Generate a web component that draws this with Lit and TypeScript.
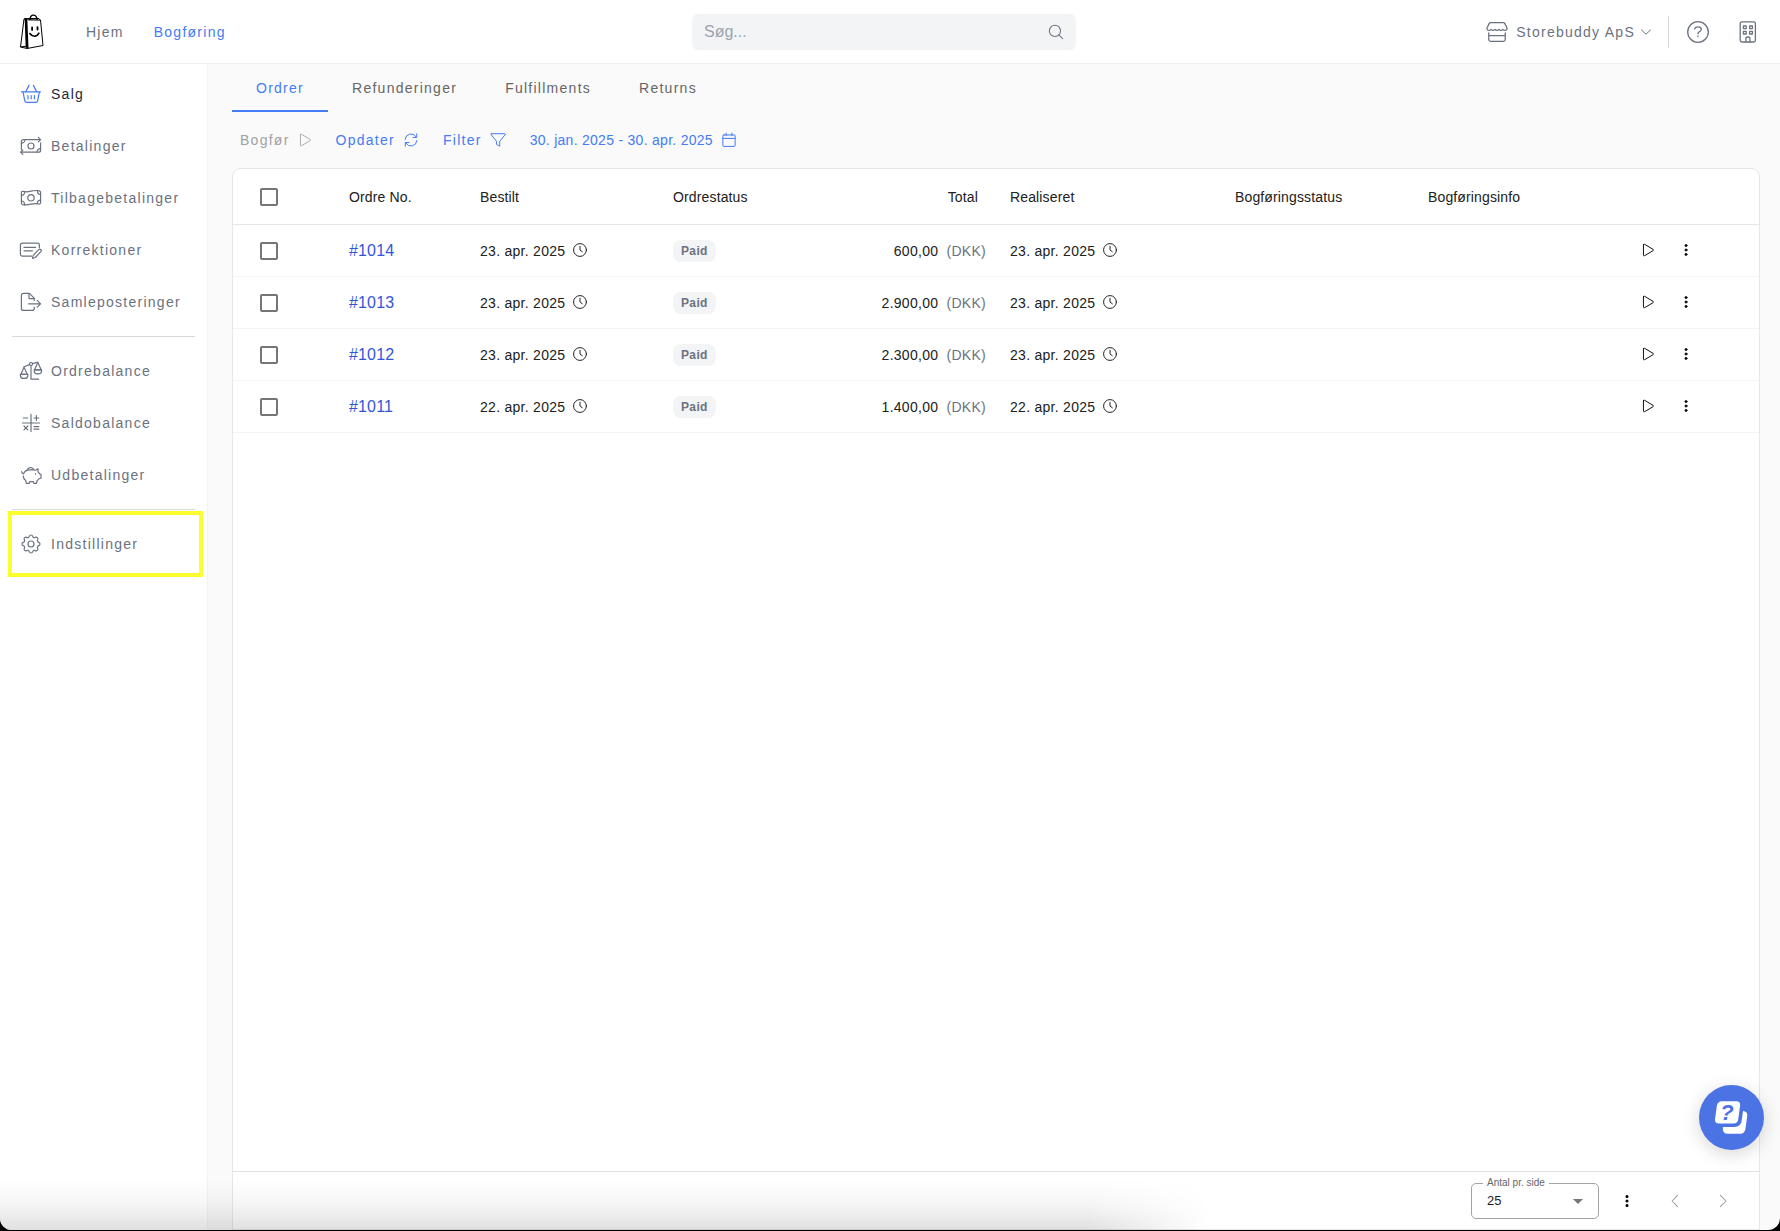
import { LitElement, html, svg, css, nothing } from "lit";
import type { TemplateResult } from "lit";
import { customElement, property } from "lit/decorators.js";
import { classMap } from "lit/directives/class-map.js";

/* Line icons on a 24-unit grid; every one inherits its stroke from the host. */
const ICONS: Record<string, TemplateResult> = {
  basket: svg`
    <path d="M2.5 9.8h19"/>
    <path d="M6.8 9.6 10 3.4M17.6 9.6l-3.2-6.2"/>
    <path d="M4 10l1.8 8.8a2 2 0 0 0 2 1.6h8.8a2 2 0 0 0 2-1.6L20.4 10"/>
    <path d="M9 13.6v3.2M12.2 13.6v3.2M15.4 13.6v3.2"/>`,
  transfer: svg`
    <path d="M2.4 15.4V7.6a2 2 0 0 1 2-2h17.2M19.4 3.4l2.2 2.2-2.2 2.2"/>
    <path d="M21.6 8.8v7.4a2 2 0 0 1-2 2H1.6M3.8 16l-2.2 2.2 2.2 2.2"/>
    <circle cx="12" cy="12" r="3"/>
    <path d="M2.4 9.2a3.6 3.6 0 0 0 3.6-3.6M21.6 14.6a3.6 3.6 0 0 0-3.6 3.6"/>`,
  refund: svg`
    <path d="M2.4 6.6c0-.9.8-1.4 1.6-1.2 3 .8 5 .6 8-.2s5.4-1 8.2-.4c.8.2 1.4.8 1.4 1.600v10.4c0 .9-.8 1.4-1.6 1.2-3-.8-5-.6-8 .2s-5.4 1-8.2.4c-.8-.2-1.4-.8-1.4-1.6z"/>
    <circle cx="12" cy="11.8" r="3.2"/>
    <path d="M2.4 9.4c1.8 0 3.2-1.4 3.4-3.6M21.6 8.6c-1.8 0-3.2-1.4-3.2-4M21.6 14.2c-1.8 0-3.2 1.4-3.4 3.6M2.4 15c1.8 0 3.2 1.4 3.2 4"/>`,
  note: svg`
    <path d="M12.6 18.2H3.4a2 2 0 0 1-2-2V7.2a2 2 0 0 1 2-2h15a2 2 0 0 1 2 2v2.4"/>
    <path d="M5 9.4h11.6M5 12.8h8.4"/>
    <path d="M19.6 11.6a1.5 1.5 0 0 1 2.2 2.1l-5.4 5.8-3 .9.9-3z"/>`,
  fileOut: svg`
    <path d="M15.2 10.4V8.2l-4.8-4.8H4.4a2 2 0 0 0-2 2v13a2 2 0 0 0 2 2h8.800a2 2 0 0 0 2-2v-1.2"/>
    <path d="M10 3.6v5h5"/>
    <path d="M9.6 13.8h12M18.2 10.4l3.4 3.4-3.4 3.4"/>`,
  scale: svg`
    <path d="M12 6.6v13.6h7.6"/>
    <path d="M4.8 8 10.4 5.6M13.6 4.6 19 3.2"/>
    <circle cx="12" cy="5" r="1.5"/>
    <path d="M5 8.2 1.8 15.4h6.6z"/>
    <path d="M1.4 15.4v1.2a3 3 0 0 0 3 2.8h1.4a3 3 0 0 0 3-2.8v-1.2z"/>
    <path d="M18.8 3.6l-3.2 7.2h6.6z"/>
    <path d="M15.2 10.8V12a3 3 0 0 0 3 2.8h1.4a3 3 0 0 0 3-2.8v-1.2z"/>`,
  maths: svg`
    <path d="M12 3.4v17.2M3.4 12h17.2"/>
    <path d="M4.2 7h4.6M15 7h4.8M17.4 4.6v4.8M5 15l3.8 3.8M8.8 15 5 18.8M15 15.6h4.8M15 18.2h4.8"/>`,
  piggy: svg`
    <path d="M8.2 6.8a3.6 3.6 0 0 1 6.4-.4"/>
    <path d="M2.6 8.6c0 1.4.6 2 2 2.2.8-2.6 3.4-4 6.2-4h3.2c1 0 1.8.1 2.6.4l2.4-1.4v3c.7.6 1.2 1.3 1.5 2.1l1.5.5v3.8l-2 .6c-.5.8-1.1 1.4-2 1.9l-.5 2.7h-2.7l-.4-1.8h-3.6l-.5 1.8H7.4l-.7-2.9c-1.5-1-2.5-2.6-2.5-4.7"/>
    <path d="M16.6 10.6v.6"/>`,
  gear: svg`
    <path d="M10.325 4.317c.426-1.756 2.924-1.756 3.35 0a1.724 1.724 0 0 0 2.573 1.066c1.543-.94 3.31.826 2.37 2.37a1.724 1.724 0 0 0 1.065 2.572c1.756.426 1.756 2.924 0 3.35a1.724 1.724 0 0 0-1.066 2.573c.94 1.543-.826 3.31-2.37 2.37a1.724 1.724 0 0 0-2.572 1.065c-.426 1.756-2.924 1.756-3.35 0a1.724 1.724 0 0 0-2.573-1.066c-1.543.94-3.31-.826-2.37-2.37a1.724 1.724 0 0 0-1.065-2.572c-1.756-.426-1.756-2.924 0-3.35a1.724 1.724 0 0 0 1.066-2.573c-.94-1.543.826-3.31 2.37-2.37.996.608 2.296.07 2.572-1.065z"/>
    <circle cx="12" cy="12" r="3"/>`,
  search: svg`<circle cx="10.4" cy="10.4" r="8.4"/><path d="M16.6 16.6 22 22"/>`,
  store: svg`
    <path d="M5.2 1.800h13.6a2 2 0 0 1 1.8 1.1l2.2 4.4c.6 1.6-.4 3-2 3-1.2 0-2-.7-2.4-1.2-.6.7-1.4 1.2-2.2 1.2s-1.6-.5-2.1-1.2c-.5.7-1.3 1.2-2.1 1.2s-1.6-.5-2.1-1.2c-.5.7-1.3 1.2-2.1 1.2s-1.6-.5-2.2-1.2c-.4.5-1.2 1.2-2.4 1.2-1.6 0-2.600-1.4-2-3l2.2-4.4a2 2 0 0 1 1.8-1.1z"/>
    <path d="M3 13v7.2a2 2 0 0 0 2 2h14a2 2 0 0 0 2-2V13M3 16h18"/>`,
  help: svg`
    <circle cx="12" cy="12" r="10.3"/>
    <path d="M8.6 8.8c.7-1.2 2-2 3.5-1.9 1.7 0 3.2 1 3.2 2.5 0 1.3-1.1 1.9-2.1 2.4-.8.4-1.2.8-1.2 1.6v.4M12 16v.6"/>`,
  building: svg`
    <rect x="4.2" y="1.8" width="15.2" height="20.2" rx="1.8"/>
    <path d="M7.4 6h2.800v2.600H7.400zM13.600 6h2.800v2.600h-2.800zM7.400 11.400h2.800V14H7.400zM13.600 11.400h2.800V14h-2.800zM9.900 22v-3.400c0-1 .7-1.600 2-1.600s2 .6 2 1.600V22"/>`,
  play: svg`<path d="M4.200 3.200v17.600c0 1 1 1.500 1.900 1l14.600-8.600c.9-.5.9-1.800 0-2.300L6.100 2.200c-.9-.5-1.900 0-1.900 1z"/>`,
  refresh: svg`
    <path d="M3.2 11.2A8.9 8.9 0 0 1 19.8 7.4M20.800 12.800A8.900 8.900 0 0 1 4.200 16.600"/>
    <path d="M20.600 2.600v5.600H15M3.400 21.400v-5.600H9"/>`,
  filter: svg`<path d="M2 2.600h20.400c.6 0 .9.700.5 1.200L14.600 14v7.200L9.800 18.600V14L1.500 3.800C1.100 3.300 1.400 2.600 2 2.600z"/>`,
  calendar: svg`
    <path d="M4.400 4.400h15.200a1.600 1.600 0 0 1 1.600 1.600v14a1.600 1.600 0 0 1-1.600 1.600H4.400A1.600 1.600 0 0 1 2.800 20V6a1.600 1.600 0 0 1 1.600-1.600zM2.800 9.600h18.400M7.600 1.600v4M16.400 1.600v4"/>`,
  clock: svg`<circle cx="12" cy="12" r="11"/><path d="M12 5.600V12l4 3"/>`,
  down: svg`<path d="M3 8l9 8.400L21 8"/>`,
  left: svg`<path d="M16.400 2.400 7 12l9.400 9.600"/>`,
  right: svg`<path d="M7.600 2.400 17 12l-9.400 9.600"/>`,
  dots: svg`
    <circle cx="12" cy="4.400" r="1.700" class="dot"/>
    <circle cx="12" cy="12" r="1.700" class="dot"/>
    <circle cx="12" cy="19.600" r="1.700" class="dot"/>`,
};

@customElement("line-icon")
export class LineIcon extends LitElement {
  @property() name = "";
  static styles = css`
    :host { display: inline-flex; flex: none; width: 24px; height: 24px; }
    svg {
      width: 100%; height: 100%; fill: none; stroke: currentColor; overflow: visible;
      stroke-width: var(--stroke, 1); stroke-linecap: round; stroke-linejoin: round;
    }
    .dot { fill: currentColor; }
  `;
  render() {
    return html`<svg viewBox="0 0 24 24" aria-hidden="true">${ICONS[this.name] ?? nothing}</svg>`;
  }
}

interface NavItem { label: string; icon: string; active?: boolean; marked?: boolean; }

const NAV: NavItem[][] = [
  [
    { label: "Salg", icon: "basket", active: true },
    { label: "Betalinger", icon: "transfer" },
    { label: "Tilbagebetalinger", icon: "refund" },
    { label: "Korrektioner", icon: "note" },
    { label: "Samleposteringer", icon: "fileOut" },
  ],
  [
    { label: "Ordrebalance", icon: "scale" },
    { label: "Saldobalance", icon: "maths" },
    { label: "Udbetalinger", icon: "piggy" },
  ],
  [{ label: "Indstillinger", icon: "gear", marked: true }],
];

@customElement("side-nav")
export class SideNav extends LitElement {
  static styles = css`
    :host { display: block; background: #fff; border-right: 1px solid #f3f4f6; }
    nav { padding: 4px 12px; }
    ul { list-style: none; margin: 0; padding: 0; }
    ul + ul { border-top: 1px solid #d9dade; margin-top: 8px; padding-top: 8px; }
    li { position: relative; }
    a {
      display: flex; align-items: center; gap: 8px; height: 52px; padding-left: 7px;
      color: #6b7280; font-size: 14px; letter-spacing: 0.09em; text-decoration: none;
    }
    line-icon { --stroke: 1.2; }
    .active { color: #1f2937; }
    .active line-icon { color: #447cf5; }
    .marked::after {
      content: ""; position: absolute; inset: -7px -8px -7px -4px;
      border: 4px solid #fcff2e; pointer-events: none;
    }
  `;
  render() {
    return html`<nav aria-label="Bogføring">
      ${NAV.map((group) => html`<ul>
        ${group.map((item) => html`<li class=${classMap({ marked: !!item.marked })}>
          <a href="#" class=${classMap({ active: !!item.active })}>
            <line-icon name=${item.icon}></line-icon><span>${item.label}</span>
          </a>
        </li>`)}
      </ul>`)}
    </nav>`;
  }
}

@customElement("top-bar")
export class TopBar extends LitElement {
  static styles = css`
    :host { display: block; background: #fff; border-bottom: 1px solid #f1f1f3; }
    header {
      display: grid; grid-template-columns: 1fr minmax(200px, 384px) 1fr;
      align-items: center; height: 63px; padding: 0 20px 0 8px;
      color: #6b7280; font-size: 14px; letter-spacing: 0.09em;
    }
    .start, .end, .company { display: flex; align-items: center; }
    .start { gap: 30px; }
    .end { justify-content: flex-end; }
    .logo { width: 40px; height: 40px; margin: 0 4px; color: #000; }
    .logo svg { display: block; width: 40px; height: 40px; }
    .start a { color: inherit; text-decoration: none; }
    .start .current { color: #447cf5; }
    .search {
      display: flex; align-items: center; height: 36px; padding: 0 12px;
      border-radius: 6px; background: #f3f4f6;
    }
    .search line-icon { width: 16px; height: 16px; --stroke: 1.6; }
    input {
      flex: 1; min-width: 0; padding: 0; border: 0; outline: 0; background: none;
      font: inherit; font-size: 16px; letter-spacing: normal; color: #1f2937;
    }
    input::placeholder { color: #9ca3af; opacity: 1; }
    button { display: flex; padding: 0; border: 0; background: none; color: inherit; font: inherit; letter-spacing: inherit; }
    .company { gap: 8px; padding-right: 16px; border-right: 1px solid #d9dade; height: 32px; margin-right: 17px; }
    .company line-icon { width: 22px; height: 22px; --stroke: 1.4; }
    .company .caret { width: 12px; height: 12px; --stroke: 2; margin-left: -3px; }
    .tool + .tool { margin-left: 26px; }
    .tool line-icon { --stroke: 1.3; }
  `;
  render() {
    return html`<header>
      <div class="start">
        <a class="logo" href="#" aria-label="Storebuddy">
          <svg viewBox="0.5 1.500 40 40">
            <path d="M12.500 8.500 9 36.500l6.500 1.500L31.500 35 29 9.500l-2-1.500z" fill="#fff" stroke="#000"/>
            <path d="M13.200 8.200h2.600l1.200 29.600-2.800-.6z" fill="#000"/>
            <path d="M9 36.400l5.600-.6M27 8l-14.300.3M16.600 9.400 29 9.600" fill="none" stroke="#000"/>
            <path d="M18.500 9.500c-.2-6.600 6.600-6.400 7.200 0" fill="none" stroke="#000" stroke-width="1.400"/>
            <path d="M20.600 16.800v2.600M26 16.600v2.400" fill="none" stroke="#000" stroke-width="1.800" stroke-linecap="round"/>
            <path d="M18.400 23c2.600 3.800 7 3.600 9-.4" fill="none" stroke="#000" stroke-width="1.600" stroke-linecap="round"/>
          </svg>
        </a>
        <a href="#">Hjem</a>
        <a href="#" class="current">Bogføring</a>
      </div>
      <label class="search">
        <input type="search" placeholder="Søg..." aria-label="Søg" />
        <line-icon name="search"></line-icon>
      </label>
      <div class="end">
        <button class="company" type="button">
          <line-icon name="store"></line-icon>
          <span>Storebuddy ApS</span>
          <line-icon class="caret" name="down"></line-icon>
        </button>
        <button class="tool" type="button" aria-label="Hjælp"><line-icon name="help"></line-icon></button>
        <button class="tool" type="button" aria-label="Virksomhed"><line-icon name="building"></line-icon></button>
      </div>
    </header>`;
  }
}

interface Order { no: string; date: string; status: string; total: string; }

const ORDERS: Order[] = [
  { no: "#1014", date: "23. apr. 2025", status: "Paid", total: "600,00" },
  { no: "#1013", date: "23. apr. 2025", status: "Paid", total: "2.900,00" },
  { no: "#1012", date: "23. apr. 2025", status: "Paid", total: "2.300,00" },
  { no: "#1011", date: "22. apr. 2025", status: "Paid", total: "1.400,00" },
];

@customElement("order-table")
export class OrderTable extends LitElement {
  static styles = css`
    :host {
      display: flex; flex-direction: column; background: #fff;
      border: 1px solid #e5e7eb; border-radius: 8px 8px 0 0; color: #212121; font-size: 14px;
    }
    .scroll { flex: 1; min-height: 0; overflow: auto; }
    table { width: 100%; border-collapse: separate; border-spacing: 0; table-layout: fixed; }
    .c-check { width: 100px; }
    .c-no { width: 131px; }
    .c-std { width: 193px; }
    .c-total { width: 144px; }
    .c-real { width: 225px; }
    .c-act { width: 154px; }
    th, td { box-sizing: border-box; padding: 0 0 0 16px; text-align: left; white-space: nowrap; }
    th { height: 56px; border-bottom: 1px solid #e5e7eb; font-weight: 400; letter-spacing: 0.01em; }
    td { height: 52px; border-bottom: 1px solid #f3f4f6; letter-spacing: 0.02em; }
    .pick { padding-left: 27px; }
    th.total { padding-right: 16px; text-align: right; }
    td.total { padding-right: 8px; text-align: right; }
    .total span { margin-left: 4px; color: #6b7280; }
    .act { padding-left: 28px; }
    .pick input {
      appearance: none; display: block; width: 18px; height: 18px; margin: 0;
      border: 2px solid #757575; border-radius: 2px; background: #fff;
    }
    .pick input:checked { background: #447cf5; border-color: #447cf5; }
    td a { color: #3455db; font-size: 16px; letter-spacing: 0.01em; text-decoration: none; }
    .when, .tools { display: flex; align-items: center; gap: 8px; }
    .when line-icon { width: 14px; height: 14px; margin-bottom: 2px; --stroke: 1.7; }
    .chip {
      display: inline-block; height: 22px; padding: 0 8px; border-radius: 8px;
      background: #f3f4f6; color: #6b7280; font-size: 12px; font-weight: 700;
      line-height: 22px; letter-spacing: 0.03em; vertical-align: middle;
    }
    button {
      display: flex; align-items: center; justify-content: center; width: 30px; height: 30px;
      padding: 0; border: 0; background: none; color: #000;
    }
    .tools { padding-bottom: 2px; }
    .tools line-icon { width: 14px; height: 14px; --stroke: 1.6; }
    footer {
      display: flex; align-items: center; justify-content: flex-end; gap: 8px;
      height: 57px; padding: 0 16px 0 0; border-top: 1px solid #e0e0e0;
    }
    footer button { width: 40px; height: 40px; }
    footer line-icon { width: 14px; height: 14px; --stroke: 1.8; }
    footer button:disabled { color: #9e9e9e; }
    .size { position: relative; }
    .size label {
      position: absolute; top: -6px; left: 12px; padding: 0 4px; background: #fff;
      color: #666; font-size: 10px; line-height: 12px;
    }
    .size select {
      appearance: none; display: block; width: 128px; height: 36px; padding: 0 15px;
      border: 1px solid #a3a3a3; border-radius: 5px; background: #fff;
      color: #212121; font: inherit; font-size: 13px;
    }
    .size::after {
      content: ""; position: absolute; right: 16px; top: 16px; pointer-events: none;
      border: 5px solid transparent; border-top-color: #757575; border-bottom: 0;
    }
  `;
  private when(date: string) {
    return html`<span class="when">${date}<line-icon name="clock"></line-icon></span>`;
  }
  render() {
    return html`
      <div class="scroll">
        <table>
          <colgroup>
            <col class="c-check" /><col class="c-no" /><col class="c-std" /><col class="c-std" />
            <col class="c-total" /><col class="c-real" /><col class="c-std" /><col class="c-std" /><col class="c-act" />
          </colgroup>
          <thead>
            <tr>
              <th class="pick"><input type="checkbox" aria-label="Vælg alle" /></th>
              <th>Ordre No.</th><th>Bestilt</th><th>Ordrestatus</th><th class="total">Total</th>
              <th>Realiseret</th><th>Bogføringsstatus</th><th>Bogføringsinfo</th><th></th>
            </tr>
          </thead>
          <tbody>
            ${ORDERS.map((o) => html`<tr>
              <td class="pick"><input type="checkbox" aria-label=${`Vælg ${o.no}`} /></td>
              <td><a href="#">${o.no}</a></td>
              <td>${this.when(o.date)}</td>
              <td><span class="chip">${o.status}</span></td>
              <td class="total">${o.total} <span>(DKK)</span></td>
              <td>${this.when(o.date)}</td>
              <td></td>
              <td></td>
              <td class="act"><div class="tools">
                <button type="button" aria-label="Bogfør"><line-icon name="play"></line-icon></button>
                <button type="button" aria-label="Mere"><line-icon name="dots"></line-icon></button>
              </div></td>
            </tr>`)}
          </tbody>
        </table>
      </div>
      <footer>
        <div class="size">
          <select id="page-size"><option>25</option><option>50</option><option>100</option></select>
          <label for="page-size">Antal pr. side</label>
        </div>
        <button type="button" aria-label="Mere"><line-icon name="dots"></line-icon></button>
        <button type="button" aria-label="Forrige side" disabled><line-icon name="left"></line-icon></button>
        <button type="button" aria-label="Næste side" disabled><line-icon name="right"></line-icon></button>
      </footer>`;
  }
}

@customElement("app-root")
export class AppRoot extends LitElement {
  static styles = css`
    :host {
      display: block; height: 100vh; overflow: hidden; background: #000;
      font-family: "Liberation Sans", Arial, Helvetica, sans-serif;
    }
    .shell {
      position: relative; box-sizing: border-box; display: grid;
      grid-template: auto minmax(0, 1fr) / 208px minmax(0, 1fr);
      height: calc(100vh - 1px); overflow: hidden; background: #fafafa;
      border-radius: 0 0 12px 12px;
    }
    top-bar { grid-column: 1 / -1; }
    main { display: flex; flex-direction: column; padding: 0 20px 0 24px; min-width: 0; }
    order-table { flex: 1; min-height: 0; }
    .tabs { display: flex; height: 48px; }
    .tabs button {
      padding: 2px 24px 0; border: 0; border-bottom: 2px solid transparent; background: none;
      color: #666; font: inherit; font-size: 14px; letter-spacing: 0.09em;
    }
    .tabs .current { color: #447cf5; border-color: #447cf5; }
    .tools { display: flex; align-items: center; gap: 8px; height: 56px; }
    .tools button {
      display: flex; align-items: center; gap: 8px; padding: 0 8px; border: 0; background: none;
      color: #447cf5; font: inherit; font-size: 14px; letter-spacing: 0.09em;
    }
    .tools line-icon { width: 16px; height: 16px; --stroke: 1.5; }
    .tools button:disabled { color: #a1a1a1; }
    .tools button:disabled line-icon { width: 14px; height: 14px; }
    .tools .range { letter-spacing: 0.02em; }
    .chat {
      position: absolute; right: 16px; bottom: 80px; width: 65px; height: 65px; padding: 0;
      border: 0; border-radius: 50%; background: #4c73e3;
      box-shadow: 0 4px 18px rgba(0, 0, 0, 0.16);
    }
    .chat svg { display: block; width: 65px; height: 65px; }
    .chat text { font: italic 700 22px "Liberation Sans", Arial, sans-serif; fill: #4c73e3; }
    .shade {
      position: absolute; left: 0; bottom: 0; width: 68%; height: 50px; pointer-events: none;
      background: linear-gradient(to top, rgba(0, 0, 0, 0.12), rgba(0, 0, 0, 0.04) 50%, transparent);
      mask-image: linear-gradient(to left, transparent, #000 10%);
    }
  `;
  render() {
    return html`<div class="shell">
      <top-bar></top-bar>
      <side-nav></side-nav>
      <main>
        <div class="tabs" role="tablist">
          ${["Ordrer", "Refunderinger", "Fulfillments", "Returns"].map((t, i) => html`
            <button type="button" role="tab" aria-selected=${i === 0} class=${classMap({ current: i === 0 })}>${t}</button>`)}
        </div>
        <div class="tools">
          <button type="button" disabled>Bogfør<line-icon name="play"></line-icon></button>
          <button type="button">Opdater<line-icon name="refresh"></line-icon></button>
          <button type="button">Filter<line-icon name="filter"></line-icon></button>
          <button type="button" class="range">30. jan. 2025 - 30. apr. 2025<line-icon name="calendar"></line-icon></button>
        </div>
        <order-table></order-table>
      </main>
      <div class="shade"></div>
      <button class="chat" type="button" aria-label="Hjælp og chat">
        <svg viewBox="0 0 65 65">
          <path d="M23 16.300h14.500c2.600 0 4 1.600 3.600 4.200l-1.900 14c-.3 2.400-2.100 4.100-4.600 4.100H20c-2.800 0-4.300-1.700-4-4.300l1.900-13.600c.4-2.700 2.300-4.400 5.100-4.400z" fill="#fff"/>
          <path d="M44 26c3 .3 4.700 1.900 4.300 4.600l-1.900 13.600c-.4 2.700-2.300 4.500-5 4.500H28.600c-3 0-4.700-1.600-4.700-4.200V42h11.500c4 0 6.800-2.400 7.300-6.400z" fill="#fff"/>
          <text x="28" y="35" text-anchor="middle">?</text>
        </svg>
      </button>
    </div>`;
  }
}
